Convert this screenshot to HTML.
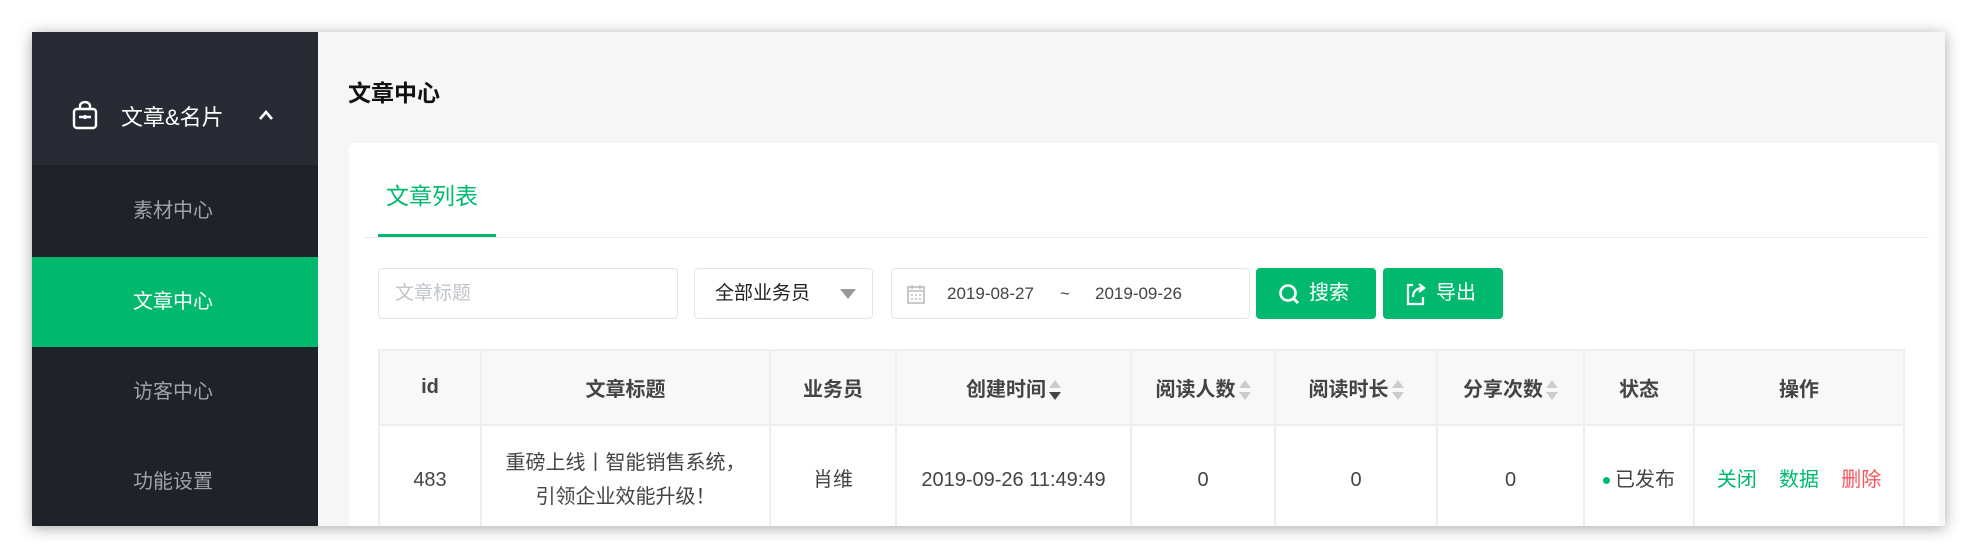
<!DOCTYPE html>
<html><head><meta charset="utf-8"><style>
*{margin:0;padding:0;box-sizing:border-box}
body{width:1977px;height:556px;background:#fff;font-family:"Liberation Sans","Noto Sans CJK SC",sans-serif;position:relative;overflow:hidden}
.win{position:absolute;left:32px;top:32px;width:1913px;height:494px;background:#f6f6f6;box-shadow:0 2px 14px rgba(0,0,0,.35);overflow:hidden}
.side{position:absolute;left:0;top:0;width:286px;height:100%;background:#1f2229}
.side .top{height:133px;background:#282b33;position:relative;color:#fff;font-size:22px}
.side .item{position:absolute;left:0;width:282px;height:90px;line-height:90px;text-align:center;color:#a0a2a6;font-size:20px}
.side .act{background:#00b96f;color:#fff;width:286px;padding-right:4px}
.title{position:absolute;left:316px;top:42px;font-size:23px;font-weight:bold;color:#111}
.card{position:absolute;left:317px;top:111px;width:1590px;height:420px;background:#fff;border-radius:6px}
.abs{position:absolute}
.box{position:absolute;top:125px;height:51px;border:1px solid #e3e5e8;border-radius:4px;background:#fff;font-size:19px}
.btn{position:absolute;top:125px;height:51px;background:#00b96f;border-radius:4px;color:#fff;font-size:20px;line-height:51px}
table{position:absolute;left:29px;top:206px;border-collapse:collapse;table-layout:fixed}
td,th{border:2px solid #eceef3;text-align:center;color:#444}
th{height:75px;background:#f8f8f9;font-size:20px;font-weight:bold;color:#444}
td{height:110px;font-size:20px;vertical-align:middle;line-height:34px}
.sort{display:inline-block;vertical-align:middle;width:12px;height:22px;position:relative;margin-left:3px}
.sort:before{content:"";position:absolute;left:0;top:0;border:6px solid transparent;border-bottom:8px solid #ccc;border-top:0}
.sort:after{content:"";position:absolute;left:0;top:12px;border:6px solid transparent;border-top:8px solid #ccc;border-bottom:0}
.sort.d:after{border-top-color:#444}
</style></head><body>
<div class="win">
 <div class="side">
  <div class="top">
   <svg class="abs" style="left:40px;top:69px" width="26" height="30" viewBox="0 0 26 30"><rect x="2" y="8" width="22" height="19" rx="3" fill="none" stroke="#fff" stroke-width="2.4"/><path d="M8 8V5a5 4 0 0 1 10 0v3" fill="none" stroke="#fff" stroke-width="2.4"/><path d="M7 16h12M13 14v4" stroke="#fff" stroke-width="2.4"/></svg>
   <div class="abs" style="left:89px;top:68px">文章&amp;名片</div>
   <svg class="abs" style="left:226px;top:77px" width="16" height="12" viewBox="0 0 16 12"><path d="M2 10L8 3l6 7" fill="none" stroke="#fff" stroke-width="2.6"/></svg>
  </div>
  <div class="item" style="top:134px">素材中心</div>
  <div class="item act" style="top:225px">文章中心</div>
  <div class="item" style="top:315px">访客中心</div>
  <div class="item" style="top:405px">功能设置</div>
 </div>
 <div class="title">文章中心</div>
 <div class="card">
  <div class="abs" style="left:37px;top:34px;font-size:23px;color:#00b96f">文章列表</div>
  <div class="abs" style="left:29px;top:91px;width:118px;height:4px;background:#00b96f"></div>
  <div class="abs" style="left:15px;top:94px;width:1565px;height:1px;background:#e8eaec"></div>
  <div class="box" style="left:29px;width:300px;color:#c0c4cc;line-height:49px;padding-left:16px">文章标题</div>
  <div class="box" style="left:345px;width:179px;color:#222;line-height:49px;padding-left:20px">全部业务员<span class="abs" style="right:16px;top:20px;border:8px solid transparent;border-top:10px solid #999;border-bottom:0"></span></div>
  <div class="box" style="left:542px;width:359px;color:#444;font-size:17px;line-height:49px">
   <svg class="abs" style="left:15px;top:15px" width="18" height="20" viewBox="0 0 18 20"><rect x="1" y="3" width="16" height="16" fill="none" stroke="#bbb" stroke-width="1.6"/><path d="M1 7h16M5 1v4M13 1v4M4 11h2M8 11h2M12 11h2M4 15h2M8 15h2M12 15h2" stroke="#bbb" stroke-width="1.5"/></svg>
   <span class="abs" style="left:55px">2019-08-27</span><span class="abs" style="left:168px">~</span><span class="abs" style="left:203px">2019-09-26</span>
  </div>
  <div class="btn" style="left:907px;width:120px">
   <svg class="abs" style="left:22px;top:15px" width="22" height="22" viewBox="0 0 22 22"><circle cx="10" cy="10" r="7.5" fill="none" stroke="#fff" stroke-width="2.6"/><path d="M15 15l5 5" stroke="#fff" stroke-width="2.8"/></svg>
   <span class="abs" style="left:53px">搜索</span></div>
  <div class="btn" style="left:1034px;width:120px">
   <svg class="abs" style="left:22px;top:14px" width="22" height="24" viewBox="0 0 22 24"><path d="M8 3H3v19h15v-7" fill="none" stroke="#fff" stroke-width="2.2"/><path d="M8 15c0-6 4-9 10-9M14 2l5 4-5 4" fill="none" stroke="#fff" stroke-width="2.2"/></svg>
   <span class="abs" style="left:53px">导出</span></div>
  <table>
   <colgroup><col style="width:102px"><col style="width:289px"><col style="width:126px"><col style="width:235px"><col style="width:144px"><col style="width:162px"><col style="width:147px"><col style="width:110px"><col style="width:210px"></colgroup>
   <tr><th>id</th><th>文章标题</th><th>业务员</th><th>创建时间<span class="sort d"></span></th><th>阅读人数<span class="sort"></span></th><th>阅读时长<span class="sort"></span></th><th>分享次数<span class="sort"></span></th><th>状态</th><th>操作</th></tr>
   <tr><td>483</td><td>重磅上线丨智能销售系统，<br>引领企业效能升级！</td><td>肖维</td><td>2019-09-26 11:49:49</td><td>0</td><td>0</td><td>0</td><td><span style="display:inline-block;width:7px;height:7px;border-radius:50%;background:#00b96f;vertical-align:middle;margin-right:5px"></span>已发布</td><td><span style="color:#00b96f">关闭</span>&nbsp;&nbsp;&nbsp;&nbsp;<span style="color:#00b96f">数据</span>&nbsp;&nbsp;&nbsp;&nbsp;<span style="color:#f5545c">删除</span></td></tr>
  </table>
 </div>
</div>
</body></html>
